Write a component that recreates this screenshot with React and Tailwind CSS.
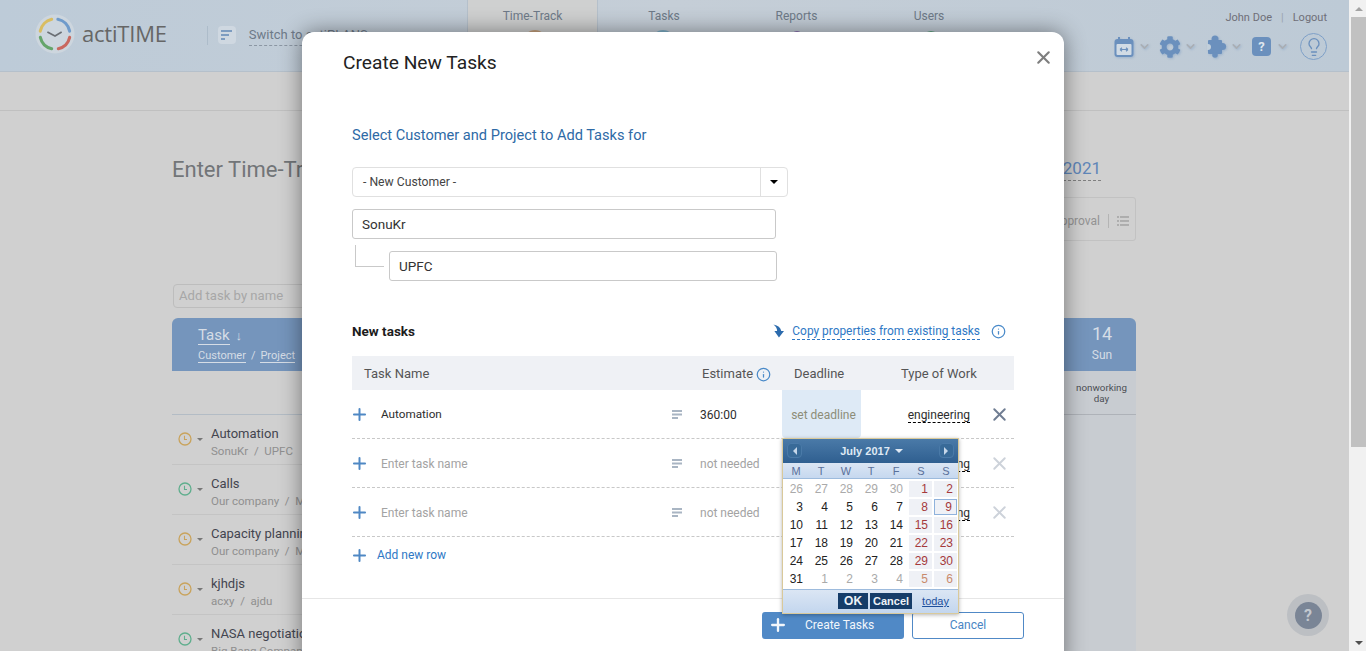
import React from "react";
import { FaCog } from "react-icons/fa";
import { Lightbulb, X, Plus, Info, ChevronDown } from "lucide-react";

const tasks = [
  { name: "Automation", sub: "SonuKr  /  UPFC", color: "#c9a35c" },
  { name: "Calls", sub: "Our company  /  M", color: "#5fae8d" },
  { name: "Capacity planning", sub: "Our company  /  M", color: "#c9a35c" },
  { name: "kjhdjs", sub: "acxy  /  ajdu", color: "#c9a35c" },
  { name: "NASA negotiation", sub: "Big Bang Company", color: "#5fae8d" },
];

const days = [
  [26, 27, 28, 29, 30, 1, 2],
  [3, 4, 5, 6, 7, 8, 9],
  [10, 11, 12, 13, 14, 15, 16],
  [17, 18, 19, 20, 21, 22, 23],
  [24, 25, 26, 27, 28, 29, 30],
  [31, 1, 2, 3, 4, 5, 6],
];

const Logo = () => (
  <svg width="40" height="40" viewBox="0 0 42 42" fill="none">
    <circle cx="21" cy="21" r="20.5" fill="#cdd6de" />
    <g strokeWidth="3.2" strokeLinecap="round">
      <path d="M5.5 18 A15.8 15.8 0 0 1 17.5 5.6" stroke="#d9bd62" />
      <path d="M24 5.5 A15.8 15.8 0 0 1 36.4 18" stroke="#6f9bcb" />
      <path d="M36.4 24.5 A15.8 15.8 0 0 1 24.5 36.4" stroke="#c9685f" />
      <path d="M17.5 36.4 A15.8 15.8 0 0 1 5.6 24.5" stroke="#65a56b" />
    </g>
    <path d="M13 19 L21 23 L28 19" stroke="#6b6f75" strokeWidth="1.8" />
  </svg>
);

const PuzzleIcon = () => (
  <svg width="20" height="23" viewBox="0 0 20 23" fill="#6b90bd">
    <rect x="1" y="5" width="14" height="14" rx="1" />
    <circle cx="8" cy="4" r="3.5" />
    <circle cx="8" cy="20" r="2.8" />
    <circle cx="15.5" cy="11.5" r="3.6" />
    <circle cx="1" cy="12" r="3" fill="#c2cfda" />
  </svg>
);

const RowClock = ({ color }) => (
  <svg width="14" height="14" viewBox="0 0 14 14" fill="none">
    <circle cx="7" cy="7" r="6" stroke={color} strokeWidth="1.3" />
    <path d="M6.5 3.8 V7.5 H9" stroke={color} strokeWidth="1.1" />
  </svg>
);

const NotesIcon = () => (
  <svg width="10" height="9" viewBox="0 0 10 9" fill="#a9b5c3">
    <rect y="0" width="10" height="2" />
    <rect y="3.5" width="10" height="2" />
    <rect y="7" width="6" height="2" />
  </svg>
);

const InfoIcon = () => <Info size={15} strokeWidth={2} className="text-[#4a8ac9]" />;

const HeadChevron = ({ className }) => (
  <ChevronDown size={13} strokeWidth={3} className={`text-[#a9aeb4] ${className}`} />
);

const TaskRow = ({ name, estimate, first }) => (
  <div className="flex h-[49px] items-center border-b border-dashed border-[#c8c8c8] text-[12px]">
    <div className="w-[29px]">
      <Plus size={19} strokeWidth={2.5} className="text-[#4f88c4] -ml-[2px]" />
    </div>
    <div className={`w-[291px] pt-[2px] ${first ? "text-[#2d2d2d] text-[11.7px]" : "text-[#a3a3a3]"}`}>{name}</div>
    <div className="w-[28px]">
      <NotesIcon />
    </div>
    <div className={`w-[82px] pt-[2px] ${first ? "text-[#2d2d2d]" : "text-[#a3a3a3]"}`}>{estimate}</div>
    <div className={`w-[79px] h-full rounded-b flex items-center justify-center pt-[2px] pl-[4px] text-[#8d8d78] ${first ? "bg-[#deeaf6]" : ""}`}>
      {first ? "set deadline" : ""}
    </div>
    <div className="w-[109px] pt-[2px] text-right">
      <span className="text-[#2d2d2d] border-b border-dashed border-black">engineering</span>
    </div>
    <div className="flex-1 pl-[19px]">
      <X size={21} strokeWidth={2.2} className={first ? "text-[#6f7d92]" : "text-[#cdd2da]"} />
    </div>
  </div>
);

const Calendar = () => (
  <div className="absolute left-[480px] top-[406px] w-[177px] h-[176px] border border-[#d9c99a] bg-white flex flex-col font-['Liberation_Sans',sans-serif] shadow-[0_1px_4px_rgba(0,0,0,0.3)]">
    <div className="h-[25px] px-[4px] flex items-center justify-between bg-gradient-to-b from-[#4a7aa8] to-[#2f5f90]">
      <div className="w-[15px] h-[15px] bg-[#386a98] border border-[#4a7aa8] rounded-sm flex items-center justify-center">
        <span className="w-0 h-0 border-y-[4px] border-y-transparent border-r-[4px] border-r-[#c6d7ea]"></span>
      </div>
      <div className="flex items-center gap-[5px] pt-[1px] pl-[2px] text-[11px] font-bold text-[#dfe9f4]">
        July 2017
        <span className="w-0 h-0 border-x-[4px] border-x-transparent border-t-[4px] border-t-[#dfe9f4]"></span>
      </div>
      <div className="w-[15px] h-[15px] bg-[#386a98] border border-[#4a7aa8] rounded-sm flex items-center justify-center">
        <span className="w-0 h-0 border-y-[4px] border-y-transparent border-l-[4px] border-l-[#c6d7ea]"></span>
      </div>
    </div>
    <div className="h-[16px] grid grid-cols-7 items-center text-center text-[11px] text-[#5a709a] bg-gradient-to-b from-[#dbe6f4] to-[#c6d8ef] border-b border-[#9dbbdd]">
      {["M", "T", "W", "T", "F", "S", "S"].map((d, i) => (
        <span key={i} className="pl-[1px]">{d}</span>
      ))}
    </div>
    <div className="flex-1 pt-[2px]">
      {days.map((week, w) => (
        <div key={w} className="grid grid-cols-7 h-[18px] text-[12px] leading-[16px]">
          {week.map((d, i) => {
            const outside = (w === 0 && d > 20) || (w === 5 && d < 10);
            const weekend = i > 4;
            let color = "text-[#222]";
            if (outside) color = "text-[#aaa]";
            if (weekend) color = "text-[#a5393b]";
            if (weekend && outside) color = "text-[#c98a6c]";
            const today = w === 1 && i === 6;
            return (
              <div
                key={i}
                className={`flex items-center justify-end pr-[4px] mb-[2px] mx-[1px] h-[16px] ${color} ${weekend ? "bg-[#eff1f6]" : ""} ${
                  today ? "border border-[#8fb2dc] bg-[#dbe7f5]" : ""
                }`}
              >
                {d}
              </div>
            );
          })}
        </div>
      ))}
    </div>
    <div className="h-[25px] flex items-center justify-end gap-[2px] pr-[9px] bg-gradient-to-b from-[#dbe6f4] to-[#c3d6ee] border-t border-[#9dbbdd] text-[11px] font-bold">
      <span className="h-[16px] w-[30px] leading-[16px] text-center bg-[#163d69] text-[#eef3f8] text-[12px]">OK</span>
      <span className="h-[16px] w-[42px] leading-[16px] text-center bg-[#163d69] text-[#eef3f8] text-[11px]">Cancel</span>
      <span className="ml-[8px] font-normal text-[#1d4f9c] underline text-[11px]">today</span>
    </div>
  </div>
);

const Modal = () => (
  <div className="absolute left-[302px] top-[32px] w-[762px] h-[640px] bg-white rounded-xl shadow-[0_0_22px_rgba(0,0,0,0.45)] font-[Roboto,sans-serif]">
    <button className="absolute right-[10px] top-[15px] text-[#7e7e7e]">
      <X size={21} strokeWidth={2.4} />
    </button>
    <h1 className="pl-[41px] pt-[19px] text-[19.2px] leading-[24px] text-[#222]">Create New Tasks</h1>
    <div className="px-[50px]">
      <p className="mt-[49px] text-[14.6px] leading-[22px] text-[#2e6aa6]">Select Customer and Project to Add Tasks for</p>
      <div className="mt-[21px] w-[436px] h-[30px] border border-[#e0e0e0] rounded-sm flex items-center text-[12.2px] text-[#444]">
        <span className="flex-1 pl-[10px]">- New Customer -</span>
        <span className="w-[27px] h-full border-l border-[#e0e0e0] flex items-center justify-center">
          <span className="w-0 h-0 border-x-[4px] border-x-transparent border-t-[4px] border-t-black"></span>
        </span>
      </div>
      <div className="mt-[12px] w-[424px] h-[30px] border border-[#c9c9c9] rounded-[3px] pl-[9px] pt-[1px] flex items-center text-[13.5px] text-[#333]">SonuKr</div>
      <div className="flex">
        <div className="ml-[3px] mt-[6px] w-[29px] h-[22px] border-l border-b border-[#c9c9c9]"></div>
        <div className="ml-[5px] mt-[12px] w-[388px] h-[30px] border border-[#c9c9c9] rounded-[3px] pl-[9px] pt-[1px] flex items-center text-[13.5px] text-[#333]">UPFC</div>
      </div>
      <div className="mt-[40px] flex items-center h-[20px]">
        <span className="flex-1 text-[13.5px] font-bold text-[#1c1c1c]">New tasks</span>
        <svg width="11" height="14" viewBox="0 0 12 14" className="mr-[8px]" fill="#2c6bad">
          <path d="M0.5 0 Q8 1.5 9 7 L12 7 L6.5 14 L1.5 7 L4.5 7 Q4.5 3 0.5 0Z" />
        </svg>
        <span className="mt-[2px] text-[11.9px] text-[#2e78c5] border-b border-dashed border-[#2e78c5] leading-[15px]">Copy properties from existing tasks</span>
        <span className="ml-[11px] mr-[8px]"><InfoIcon /></span>
      </div>
      <div className="mt-[15px] h-[34px] pt-[2px] bg-[#eff1f5] flex items-center text-[13px] text-[#555]">
        <span className="w-[350px] pl-[12px]">Task Name</span>
        <span className="w-[92px] flex items-center gap-[3px]">Estimate <InfoIcon /></span>
        <span className="w-[107px]">Deadline</span>
        <span>Type of Work</span>
      </div>
      <TaskRow first name="Automation" estimate="360:00" />
      <TaskRow name="Enter task name" estimate="not needed" />
      <TaskRow name="Enter task name" estimate="not needed" />
      <div className="mt-[9px] h-[18px] flex items-center text-[12px] text-[#2e78c5]">
        <Plus size={19} strokeWidth={2.5} className="text-[#4f88c4] -ml-[2px] mr-[8px]" />
        Add new row
      </div>
    </div>
    <div className="mt-[34px] border-t border-[#e6e6e6] pt-[13px] pl-[460px] flex gap-[8px] text-[12px]">
      <div className="w-[142px] h-[27px] pb-[1px] bg-[#5089c6] rounded-[3px] flex items-center text-[#f2f6fb]">
        <Plus size={20} strokeWidth={2.8} className="ml-[6px]" />
        <span className="ml-[17px]">Create Tasks</span>
      </div>
      <div className="w-[112px] h-[27px] pb-[1px] border border-[#5089c6] rounded-[3px] flex items-center justify-center text-[#4a85c4]">Cancel</div>
    </div>
    <Calendar />
  </div>
);

const Page = () => (
  <div className="w-[1349px] h-full bg-[#d0d0d0] font-[Roboto,sans-serif]">
    <header className="h-[72px] border-b border-[#b5c0cb] bg-gradient-to-r from-[#bdcbd8] via-[#c5ced7] to-[#bdcad6] flex">
      <div className="w-[467px] h-[67px] flex items-center pl-[35px]">
        <Logo />
        <span className="ml-[7px] text-[22px] tracking-[-0.2px] text-[#666] font-['Open_Sans',sans-serif]">actiTIME</span>
        <span className="ml-[40px] mt-[3px] w-px h-[19px] bg-[#adbcca]"></span>
        <span className="ml-[10px] mt-[3px] w-[18px] h-[18px] bg-[#cfd8e1] rounded-sm flex flex-col justify-center gap-[2px] px-[3px]">
          <span className="h-[2px] w-[11px] bg-[#7d9cc0]"></span>
          <span className="h-[2px] w-[8px] bg-[#7d9cc0]"></span>
          <span className="h-[2px] w-[4px] bg-[#7d9cc0]"></span>
        </span>
        <span className="ml-[13px] mt-[4px] text-[13px] text-[#6e7a88] border-b border-dashed border-[#8b96a3] whitespace-nowrap">Switch to actiPLANS</span>
      </div>
      <nav className="flex h-full text-[12px] text-[#6e7a88]">
        <div className="w-[131px] border-x border-[#b5c0cb] bg-[#cfd0d0] pt-[7px] text-center">
          Time-Track
          <div className="mt-[5px] ml-[56px] w-[22px] h-[22px] rounded-full bg-[#c9a37f]"></div>
        </div>
        <div className="w-[132px] pt-[7px] text-center">
          Tasks
          <div className="mt-[5px] ml-[54px] w-[22px] h-[22px] rounded-full bg-[#7fb0c9]"></div>
        </div>
        <div className="w-[133px] pt-[7px] text-center">
          Reports
          <div className="mt-[6px] ml-[61px] w-[12px] h-[12px] rounded-full bg-[#8a6fb0]"></div>
        </div>
        <div className="w-[132px] pt-[7px] text-center">
          Users
          <div className="mt-[6px] ml-[59px] w-[18px] h-[18px] rounded-full bg-[#5fa581]"></div>
        </div>
      </nav>
      <div className="flex-1 flex flex-col items-end pr-[22px] pt-[11px]">
        <div className="text-[11px] leading-[13px] text-[#6f6f78]">
          John Doe<span className="mx-[9px] text-[#9aa3ad]">|</span>Logout
        </div>
        <div className="mt-[9px] flex items-center text-[#6b90bd] [&>svg]:drop-shadow-[1px_1px_1px_rgba(107,144,189,0.4)]">
          <svg width="20" height="22" viewBox="0 0 20 22" fill="none">
            <rect x="0.5" y="3" width="19" height="18" rx="3" fill="#6b90bd" />
            <rect x="2.5" y="8" width="15" height="11" rx="1" fill="#d1dbe5" />
            <path d="M5 1 V5 M15 1 V5" stroke="#6b90bd" strokeWidth="2" />
            <path d="M6 13.5 H14 M6 13.5 L8 11.8 M6 13.5 L8 15.2 M14 13.5 L12 11.8 M14 13.5 L12 15.2" stroke="#6b90bd" strokeWidth="1.2" />
          </svg>
          <HeadChevron className="ml-[4px] mr-[8px]" />
          <FaCog size={22} />
          <HeadChevron className="ml-[3px] mr-[10px]" />
          <PuzzleIcon />
          <HeadChevron className="ml-[3px] mr-[9px]" />
          <span className="w-[19px] h-[19px] bg-[#6b90bd] rounded text-[#dfe6ee] text-[13px] font-bold text-center leading-[19px]">?</span>
          <HeadChevron className="ml-[5px] mr-[11px]" />
          <span className="w-[27px] h-[27px] rounded-full border border-[#7ea0c8] flex items-center justify-center">
            <Lightbulb size={20} strokeWidth={1.6} />
          </span>
        </div>
      </div>
    </header>
    <div className="h-[39px] border-b border-[#c0c0c0]"></div>
    <main className="ml-[172px] w-[964px]">
      <div className="pt-[45px] flex items-start justify-between h-[86px]">
        <h2 className="text-[22px] leading-[28px] text-[#727578]">Enter Time-Track</h2>
        <span className="text-[17px] leading-[24px] mr-[35px] text-[#5f86b8] border-b border-dashed border-[#808080]">July 2021</span>
      </div>
      <div className="flex justify-end h-[44px]">
        <div className="w-[200px] h-[44px] pt-[3px] border border-[#c2c2c2] rounded-[3px] flex items-center justify-end pr-[6px] text-[12px] text-[#939393]">
          Ready for approval
          <span className="mx-[8px] w-px h-[14px] bg-[#b4b4b4]"></span>
          <svg width="12" height="10" viewBox="0 0 12 10" stroke="#8b8b8b">
            <path d="M0 1 H2 M3 1 H12 M0 5 H2 M3 5 H12 M0 9 H2 M3 9 H12" />
          </svg>
        </div>
      </div>
      <div className="mt-[43px] ml-px w-[200px] h-[24px] border border-[#bdbdbd] rounded-sm pl-[5px] flex items-center text-[13.1px] text-[#a7a7a7]">Add task by name</div>
      <div className="mt-[10px] h-[53px] bg-[#7595bc] rounded-t-md flex text-[#d6dde6]">
        <div className="flex-1 pl-[26px] pt-[8px]">
          <div className="text-[15px] leading-[18px]">
            <span className="border-b border-[#d6dde6]">Task</span> <span className="ml-[2px] text-[13px] font-bold">↓</span>
          </div>
          <div className="mt-[4px] text-[11px] leading-[13px]">
            <span className="border-b border-[#d6dde6]">Customer</span><span className="mx-[5px]">/</span><span className="border-b border-[#d6dde6]">Project</span>
          </div>
        </div>
        <div className="w-[72px] pt-[5px] pl-[4px] text-center">
          <div className="text-[18px] leading-[22px]">14</div>
          <div className="text-[12px] leading-[20px]">Sun</div>
        </div>
      </div>
      <div className="flex">
        <div className="flex-1">
          <div className="h-[44px] border-b border-[#b3bcc5]"></div>
          {tasks.map((t) => (
            <div key={t.name} className="h-[50px] border-b border-[#c4c4c4] flex">
              <div className="w-[39px] pl-[6px] pt-[17px] flex items-center gap-[5px] h-[31px]">
                <RowClock color={t.color} />
                <span className="w-0 h-0 border-x-[3px] border-x-transparent border-t-[3px] border-t-[#777]"></span>
              </div>
              <div className="pt-[10px]">
                <div className="text-[13px] leading-[17px] text-[#43454f]">{t.name}</div>
                <div className="mt-[2px] text-[11.5px] leading-[15px] text-[#8f8f8f] whitespace-pre">{t.sub}</div>
              </div>
            </div>
          ))}
        </div>
        <div className="w-[72px] h-[280px] bg-[#c8ccd1]">
          <div className="h-[44px] pt-[11px] pl-[3px] border-b border-[#aeb2b8] text-center text-[9.8px] leading-[11px] text-[#4c4f55]">
            nonworking<br />day
          </div>
        </div>
      </div>
    </main>
  </div>
);

const Scrollbar = () => (
  <div className="w-[17px] h-full bg-[#f1f1f1] pl-[2px] flex flex-col items-center">
    <div className="h-[17px] flex items-center justify-center">
      <span className="w-0 h-0 border-x-[4px] border-x-transparent border-b-[4px] border-b-[#a3a3a3]"></span>
    </div>
    <div className="w-full h-[430px] bg-[#c1c1c1]"></div>
    <div className="mt-auto h-[17px] flex items-center justify-center">
      <span className="w-0 h-0 border-x-[4px] border-x-transparent border-t-[4px] border-t-[#505050]"></span>
    </div>
  </div>
);

const App = () => {
  return (
    <div className="relative w-[1366px] h-[651px] overflow-hidden flex">
      <Page />
      <Scrollbar />
      <Modal />
      <div className="absolute left-[1287px] top-[594px] w-[42px] h-[42px] rounded-full bg-[#bcbfc3] flex items-center justify-center">
        <span className="w-[27px] h-[27px] rounded-full bg-[#7a8596] text-[#c3c8cf] text-[16px] font-bold text-center leading-[27px] font-[Roboto,sans-serif]">?</span>
      </div>
    </div>
  );
};

export default App;
